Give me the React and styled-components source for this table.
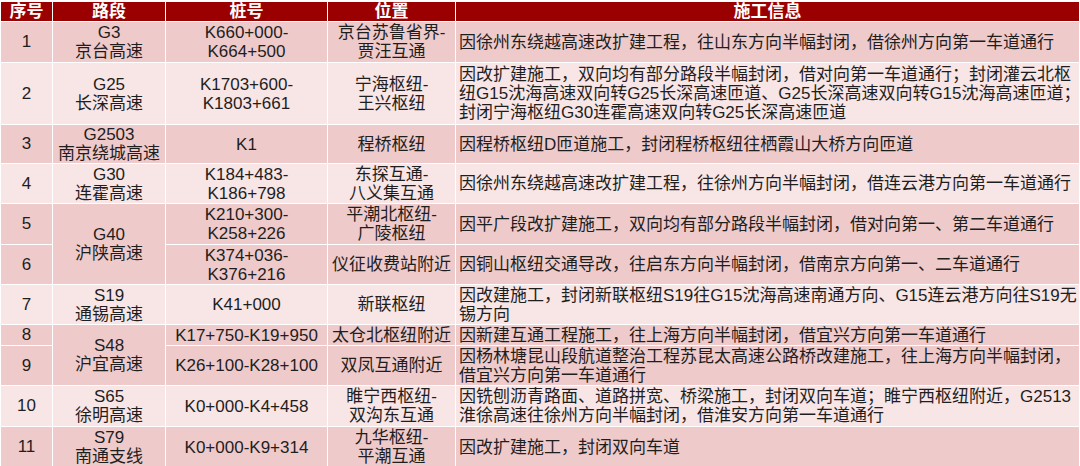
import React from 'react';
import styled, { createGlobalStyle } from 'styled-components';

const GlobalStyle = createGlobalStyle`
  html, body {
    margin: 0;
    padding: 0;
    background: #ffffff;
    overflow: hidden;
  }
  body {
    font-family: "Liberation Sans", "Noto Sans CJK SC", sans-serif;
  }
`;

const Page = styled.div`
  padding-top: 2px;
  width: 1080px;
  height: 466px;
  overflow: hidden;
  box-sizing: border-box;
`;

const Table = styled.table`
  width: 1079px;
  table-layout: fixed;
  border-collapse: collapse;
  font-size: 17px;
  line-height: 20px;
  color: #1e1e1e;
`;

const HeadCell = styled.th`
  height: 19px;
  padding: 0;
  background: #9a0000;
  color: #ffffff;
  font-weight: 700;
  font-size: 17px;
  line-height: 19px;
  text-align: center;
  border: 1px solid #ffffff;
  border-top: none;
  overflow: hidden;
`;

const HeadText = styled.div`
  height: 19px;
  line-height: 19px;
`;

const Row = styled.tr`
  height: ${({ $h }) => $h}px;
`;

const Cell = styled.td`
  padding: 0 3px;
  background: ${({ $tone }) => ($tone === 'dark' ? '#efcaca' : '#f8e5e5')};
  border: 1px solid #ffffff;
  text-align: ${({ $left }) => ($left ? 'left' : 'center')};
  vertical-align: middle;
  white-space: nowrap;
  overflow: hidden;
`;

const Line = styled.div`
  height: 19px;
  line-height: 19px;
  white-space: nowrap;
`;

const cols = [52, 113, 162, 128, 624];
const heads = ['序号', '路段', '桩号', '位置', '施工信息'];

const rows = [
  {
    no: '1', h: 41, tone: 'dark',
    road: ['G3', '京台高速'],
    pile: ['K660+000-', 'K664+500'],
    loc: ['京台苏鲁省界-', '贾汪互通'],
    info: ['因徐州东绕越高速改扩建工程，往山东方向半幅封闭，借徐州方向第一车道通行'],
  },
  {
    no: '2', h: 62, tone: 'light',
    road: ['G25', '长深高速'],
    pile: ['K1703+600-', 'K1803+661'],
    loc: ['宁海枢纽-', '王兴枢纽'],
    info: [
      '因改扩建施工，双向均有部分路段半幅封闭，借对向第一车道通行；封闭灌云北枢',
      '纽G15沈海高速双向转G25长深高速匝道、G25长深高速双向转G15沈海高速匝道；',
      '封闭宁海枢纽G30连霍高速双向转G25长深高速匝道',
    ],
  },
  {
    no: '3', h: 39, tone: 'dark',
    road: ['G2503', '南京绕城高速'],
    pile: ['K1'],
    loc: ['程桥枢纽'],
    info: ['因程桥枢纽D匝道施工，封闭程桥枢纽往栖霞山大桥方向匝道'],
  },
  {
    no: '4', h: 40, tone: 'light',
    road: ['G30', '连霍高速'],
    pile: ['K184+483-', 'K186+798'],
    loc: ['东探互通-', '八义集互通'],
    info: ['因徐州东绕越高速改扩建工程，往徐州方向半幅封闭，借连云港方向第一车道通行'],
  },
  {
    no: '5', h: 41, tone: 'dark',
    road: ['G40', '沪陕高速'], span: 2,
    pile: ['K210+300-', 'K258+226'],
    loc: ['平潮北枢纽-', '广陵枢纽'],
    info: ['因平广段改扩建施工，双向均有部分路段半幅封闭，借对向第一、第二车道通行'],
  },
  {
    no: '6', h: 40, tone: 'dark',
    road: null,
    pile: ['K374+036-', 'K376+216'],
    loc: ['仪征收费站附近'],
    info: ['因铜山枢纽交通导改，往启东方向半幅封闭，借南京方向第一、二车道通行'],
  },
  {
    no: '7', h: 40, tone: 'light',
    road: ['S19', '通锡高速'],
    pile: ['K41+000'],
    loc: ['新联枢纽'],
    info: [
      '因改建施工，封闭新联枢纽S19往G15沈海高速南通方向、G15连云港方向往S19无',
      '锡方向',
    ],
  },
  {
    no: '8', h: 20, tone: 'dark',
    road: ['S48', '沪宜高速'], span: 2,
    pile: ['K17+750-K19+950'],
    loc: ['太仓北枢纽附近'],
    info: ['因新建互通工程施工，往上海方向半幅封闭，借宜兴方向第一车道通行'],
  },
  {
    no: '9', h: 40, tone: 'dark',
    road: null,
    pile: ['K26+100-K28+100'],
    loc: ['双凤互通附近'],
    info: [
      '因杨林塘昆山段航道整治工程苏昆太高速公路桥改建施工，往上海方向半幅封闭，',
      '借宜兴方向第一车道通行',
    ],
  },
  {
    no: '10', h: 41, tone: 'light',
    road: ['S65', '徐明高速'],
    pile: ['K0+000-K4+458'],
    loc: ['睢宁西枢纽-', '双沟东互通'],
    info: [
      '因铣刨沥青路面、道路拼宽、桥梁施工，封闭双向车道；睢宁西枢纽附近，G2513',
      '淮徐高速往徐州方向半幅封闭，借淮安方向第一车道通行',
    ],
  },
  {
    no: '11', h: 41, tone: 'dark',
    road: ['S79', '南通支线'],
    pile: ['K0+000-K9+314'],
    loc: ['九华枢纽-', '平潮互通'],
    info: ['因改扩建施工，封闭双向车道'],
  },
];

const Lines = ({ items }) => items.map((t, i) => <Line key={i}>{t}</Line>);

export default function App() {
  return (
    <Page>
      <GlobalStyle />
      <Table>
        <colgroup>
          {cols.map((w, i) => (
            <col key={i} style={{ width: w }} />
          ))}
        </colgroup>
        <thead>
          <tr>
            {heads.map((h) => (
              <HeadCell key={h}>
                <HeadText>{h}</HeadText>
              </HeadCell>
            ))}
          </tr>
        </thead>
        <tbody>
          {rows.map((r) => (
            <Row key={r.no} $h={r.h}>
              <Cell $tone={r.tone}>{r.no}</Cell>
              {r.road && (
                <Cell $tone={r.tone} rowSpan={r.span || 1}>
                  <Lines items={r.road} />
                </Cell>
              )}
              <Cell $tone={r.tone}>
                <Lines items={r.pile} />
              </Cell>
              <Cell $tone={r.tone}>
                <Lines items={r.loc} />
              </Cell>
              <Cell $tone={r.tone} $left>
                <Lines items={r.info} />
              </Cell>
            </Row>
          ))}
        </tbody>
      </Table>
    </Page>
  );
}
